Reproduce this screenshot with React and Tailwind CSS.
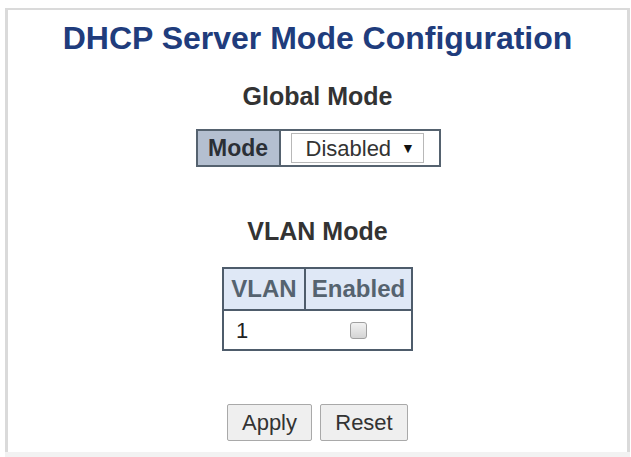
export default function App() {
  return (
    <div className="w-[631px] h-[457px] bg-white pt-2 pl-[5px] pr-[1px] font-['Liberation_Sans',Arial,sans-serif] overflow-hidden">
      <div className="h-[444px] border-t-2 border-x-[3px] border-[#dadada] flex flex-col items-center">
        <h1 className="mt-[12px] text-[32px] leading-[32px] font-bold text-[#203c7c]">
          DHCP Server Mode Configuration
        </h1>

        <h2 className="mt-[30px] text-[25px] leading-[25px] font-bold text-[#333]">Global Mode</h2>

        <div className="mt-[20px] flex h-[38px] border-2 border-[#55626f] ml-[1px]">
          <div className="w-[83px] bg-[#b4bfd0] border-r-2 border-[#55626f] flex items-center justify-center text-[23px] font-bold text-[#2b2f36]">
            Mode
          </div>
          <div className="w-[158px] flex items-center pl-[10px]">
            <div className="h-[30px] w-[133px] border border-[#b8b8b8] flex items-center pl-[14px] text-[22px] text-[#333]">
              Disabled
              <span className="ml-[10px] text-[14px] text-[#111]">▼</span>
            </div>
          </div>
        </div>

        <h2 className="mt-[52px] text-[25px] leading-[25px] font-bold text-[#333]">VLAN Mode</h2>

        <div className="mt-[23px] w-[191px] border-2 border-[#4e5c6b]">
          <div className="flex h-[42px] bg-[#dfe8f6] border-b-2 border-[#4e5c6b] text-[24px] font-bold text-[#55636f]">
            <div className="w-[82px] border-r-2 border-[#4e5c6b] flex items-center justify-center">VLAN</div>
            <div className="flex-1 flex items-center justify-center">Enabled</div>
          </div>
          <div className="flex h-[38px] text-[22px] text-[#222]">
            <div className="w-[82px] flex items-center pl-[12px]">1</div>
            <div className="flex-1 flex items-center justify-center">
              <span className="w-[17px] h-[17px] rounded-[3px] border border-[#a0a0a0] bg-gradient-to-b from-[#f2f2f2] to-[#d4d4d4]" />
            </div>
          </div>
        </div>

        <div className="mt-[53px] flex gap-[8px] text-[22px] text-[#333]">
          <button className="w-[85px] h-[37px] border border-[#a9a9a9] bg-[#efefef] rounded-[2px]">Apply</button>
          <button className="w-[88px] h-[37px] border border-[#a9a9a9] bg-[#efefef] rounded-[2px]">Reset</button>
        </div>
      </div>
      <div className="h-[5px] bg-[#f2f2f2]" />
    </div>
  );
}
